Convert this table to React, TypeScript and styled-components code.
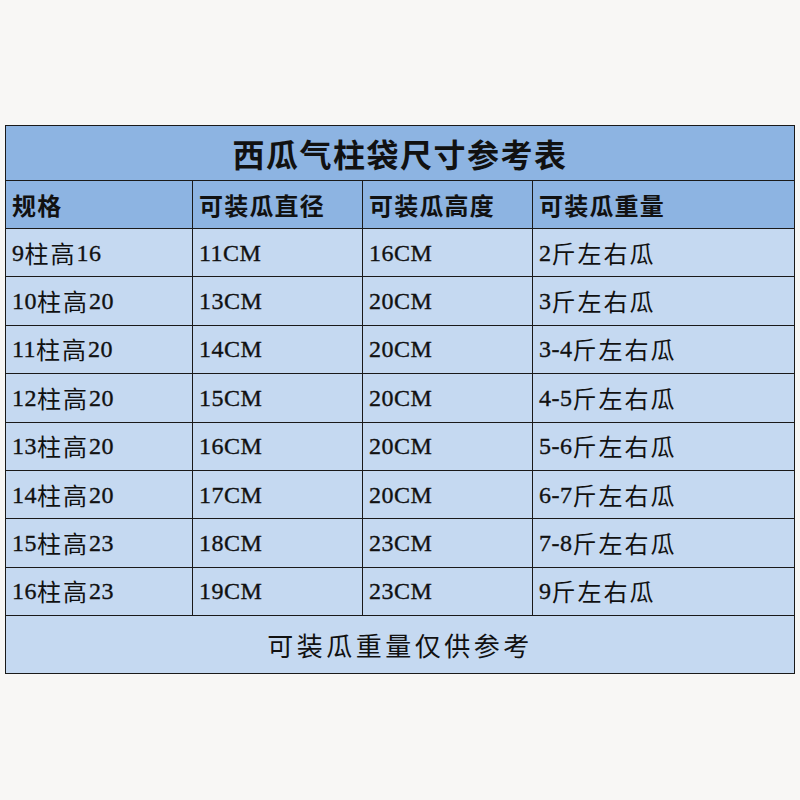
import { createGlobalStyle, styled } from "styled-components";

const GlobalStyle = createGlobalStyle`
  html, body {
    margin: 0;
    padding: 0;
    background: #f8f7f5;
  }
  #root {
    height: 800px;
  }
`;

const Page = styled.div`
  width: 800px;
  height: 800px;
  box-sizing: border-box;
  padding: 125px 5px 0 5px;
`;

const Table = styled.div`
  width: 790px;
  box-sizing: border-box;
  border: 1.5px solid #1a1a1a;
  display: grid;
  grid-template-columns: 187px 170px 170px 1fr;
  color: #111;
`;

const Title = styled.div`
  grid-column: 1 / -1;
  height: 54px;
  background: #8db4e2;
  border-bottom: 1px solid #1a1a1a;
  display: flex;
  align-items: center;
  justify-content: center;
  font-family: "Noto Sans CJK SC", sans-serif;
  font-weight: 700;
  font-size: 32px;
  letter-spacing: 1.5px;
`;

const Cell = styled.div<{ $head?: boolean; $last?: boolean }>`
  height: ${(p) => (p.$head ? "47px" : "47.4px")};
  box-sizing: content-box;
  background: ${(p) => (p.$head ? "#8db4e2" : "#c5d9f1")};
  border-bottom: 1px solid #1a1a1a;
  border-right: ${(p) => (p.$last ? "none" : "1px solid #1a1a1a")};
  display: flex;
  align-items: center;
  padding-left: 6px;
  font-family: ${(p) =>
    p.$head
      ? `"Noto Sans CJK SC", sans-serif`
      : `"Liberation Serif", "Noto Sans CJK SC", serif`};
  font-weight: ${(p) => (p.$head ? 700 : 400)};
  font-size: 24px;
  letter-spacing: ${(p) => (p.$head ? "1.2px" : "0.5px")};
  line-height: 28px;
  white-space: nowrap;
`;

const Text = styled.span`
  line-height: 28px;
  -webkit-text-stroke: 0.35px currentColor;
`;

const Han = styled.span`
  font-family: "Noto Sans CJK SC", sans-serif;
  font-size: 24px;
  letter-spacing: 2px;
  line-height: 28px;
`;

const Footer = styled.div`
  grid-column: 1 / -1;
  height: 57px;
  background: #c5d9f1;
  display: flex;
  align-items: center;
  justify-content: center;
  font-family: "Noto Sans CJK SC", serif;
  font-size: 26px;
  letter-spacing: 3.5px;
`;

const headers = ["规格", "可装瓜直径", "可装瓜高度", "可装瓜重量"];

const rows = [
  ["9柱高16", "11CM", "16CM", "2斤左右瓜"],
  ["10柱高20", "13CM", "20CM", "3斤左右瓜"],
  ["11柱高20", "14CM", "20CM", "3-4斤左右瓜"],
  ["12柱高20", "15CM", "20CM", "4-5斤左右瓜"],
  ["13柱高20", "16CM", "20CM", "5-6斤左右瓜"],
  ["14柱高20", "17CM", "20CM", "6-7斤左右瓜"],
  ["15柱高23", "18CM", "23CM", "7-8斤左右瓜"],
  ["16柱高23", "19CM", "23CM", "9斤左右瓜"],
];

// split a value into latin and chinese runs so each can get its own metrics
const renderValue = (v: string) =>
  v
    .split(/([\u4e00-\u9fff]+)/)
    .filter(Boolean)
    .map((part, i) =>
      /[\u4e00-\u9fff]/.test(part) ? (
        <Han key={i}>{part}</Han>
      ) : (
        <Text key={i}>{part}</Text>
      )
    );

export default function App() {
  return (
    <Page>
      <GlobalStyle />
      <Table>
        <Title>西瓜气柱袋尺寸参考表</Title>
        {headers.map((h, i) => (
          <Cell key={h} $head $last={i === headers.length - 1}>
            {h}
          </Cell>
        ))}
        {rows.map((row, r) =>
          row.map((v, i) => (
            <Cell key={`${r}-${i}`} $last={i === row.length - 1}>
              {renderValue(v)}
            </Cell>
          ))
        )}
        <Footer>可装瓜重量仅供参考</Footer>
      </Table>
    </Page>
  );
}
